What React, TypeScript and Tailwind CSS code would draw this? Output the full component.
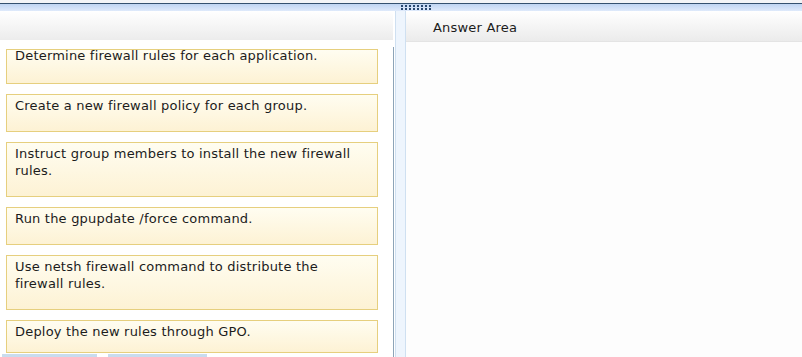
const FONT = "font-['DejaVu_Sans',Verdana,sans-serif]"

const items = [
  { text: 'Create a new firewall policy for each group.', tall: false },
  { text: 'Instruct group members to install the new firewall rules.', tall: true },
  { text: 'Run the gpupdate /force command.', tall: false },
  { text: 'Use netsh firewall command to distribute the firewall rules.', tall: true },
]

function Card({ text, tall }: { text: string; tall: boolean }) {
  return (
    <div
      className={`mb-[10px] ${tall ? 'h-[55px]' : 'h-[38px]'} shrink-0 border border-[#e6cf7e] bg-gradient-to-b from-[#fffdf1] to-[#fdf2d4] pl-[8px] pr-[20px] pt-[2px] text-[13px] leading-[17px] tracking-[0.2px] text-[#1c1c1c]`}
    >
      {text}
    </div>
  )
}

function Dots() {
  return (
    <div className="grid grid-cols-8 gap-x-[2px] gap-y-[1px]">
      {Array.from({ length: 16 }).map((_, i) => (
        <div key={i} className="h-[2px] w-[2px] bg-[#28476e]" />
      ))}
    </div>
  )
}

export default function App() {
  return (
    <div className={`flex h-[357px] w-[802px] flex-col overflow-hidden bg-white ${FONT}`}>
      <div className="h-[3px] shrink-0 bg-[#f3f5f7]" />
      <div className="h-px shrink-0 bg-[#34516f]" />
      <div className="flex h-[7px] shrink-0 items-center bg-gradient-to-b from-[#bfd5f2] to-[#dfeafb] pl-[401px]">
        <Dots />
      </div>

      <div className="flex min-h-0 flex-1 overflow-hidden">
        {/* left: draggable items */}
        <div className="flex w-[393px] flex-col">
          <div className="h-[29px] shrink-0 bg-gradient-to-b from-white to-[#ececec]" />
          <div className="flex min-h-0 flex-1 flex-col overflow-hidden px-[6px] pr-[15px] pt-[9px]">
            <div className="mb-[10px] h-[35px] shrink-0 overflow-hidden border border-[#e6cf7e] bg-gradient-to-b from-[#fffdf1] to-[#fdf2d4] pl-[8px] text-[13px] leading-[17px] tracking-[0.2px] text-[#1c1c1c]">
              <div className="-mt-[3px]">Determine firewall rules for each application.</div>
            </div>
            {items.map(it => (
              <Card key={it.text} {...it} />
            ))}
            <div className="h-[33px] shrink-0 border border-[#e6cf7e] bg-gradient-to-b from-[#fffdf1] to-[#fdf2d4] pl-[8px] pt-[2px] text-[13px] leading-[17px] tracking-[0.2px] text-[#1c1c1c]">
              Deploy the new rules through GPO.
            </div>
            <div className="-ml-[4px] mt-[1px] flex h-[4px] shrink-0 gap-[11px]">
              <div className="w-[95px] shrink-0 bg-[#c9dcee]" />
              <div className="w-[99px] shrink-0 bg-[#c9dcee]" />
            </div>
          </div>
        </div>

        {/* splitter */}
        <div className="flex w-[2px] flex-col">
          <div className="h-[36px] shrink-0" />
          <div className="flex-1 border-l border-[#8da4b8] bg-white" />
        </div>
        <div className="w-[11px] border-x border-[#cfe0f1] bg-[#eef5fd]" />

        {/* right: answer area */}
        <div className="flex flex-1 flex-col">
          <div className="flex h-[31px] shrink-0 items-center border-b border-[#e4e4e4] bg-gradient-to-b from-white to-[#ebebeb] pl-[27px] pt-[3px] text-[13px] tracking-[0.2px] text-[#1c1c1c]">
            Answer Area
          </div>
          <div className="flex-1 bg-[#fdfdfd]" />
        </div>
      </div>
    </div>
  )
}
